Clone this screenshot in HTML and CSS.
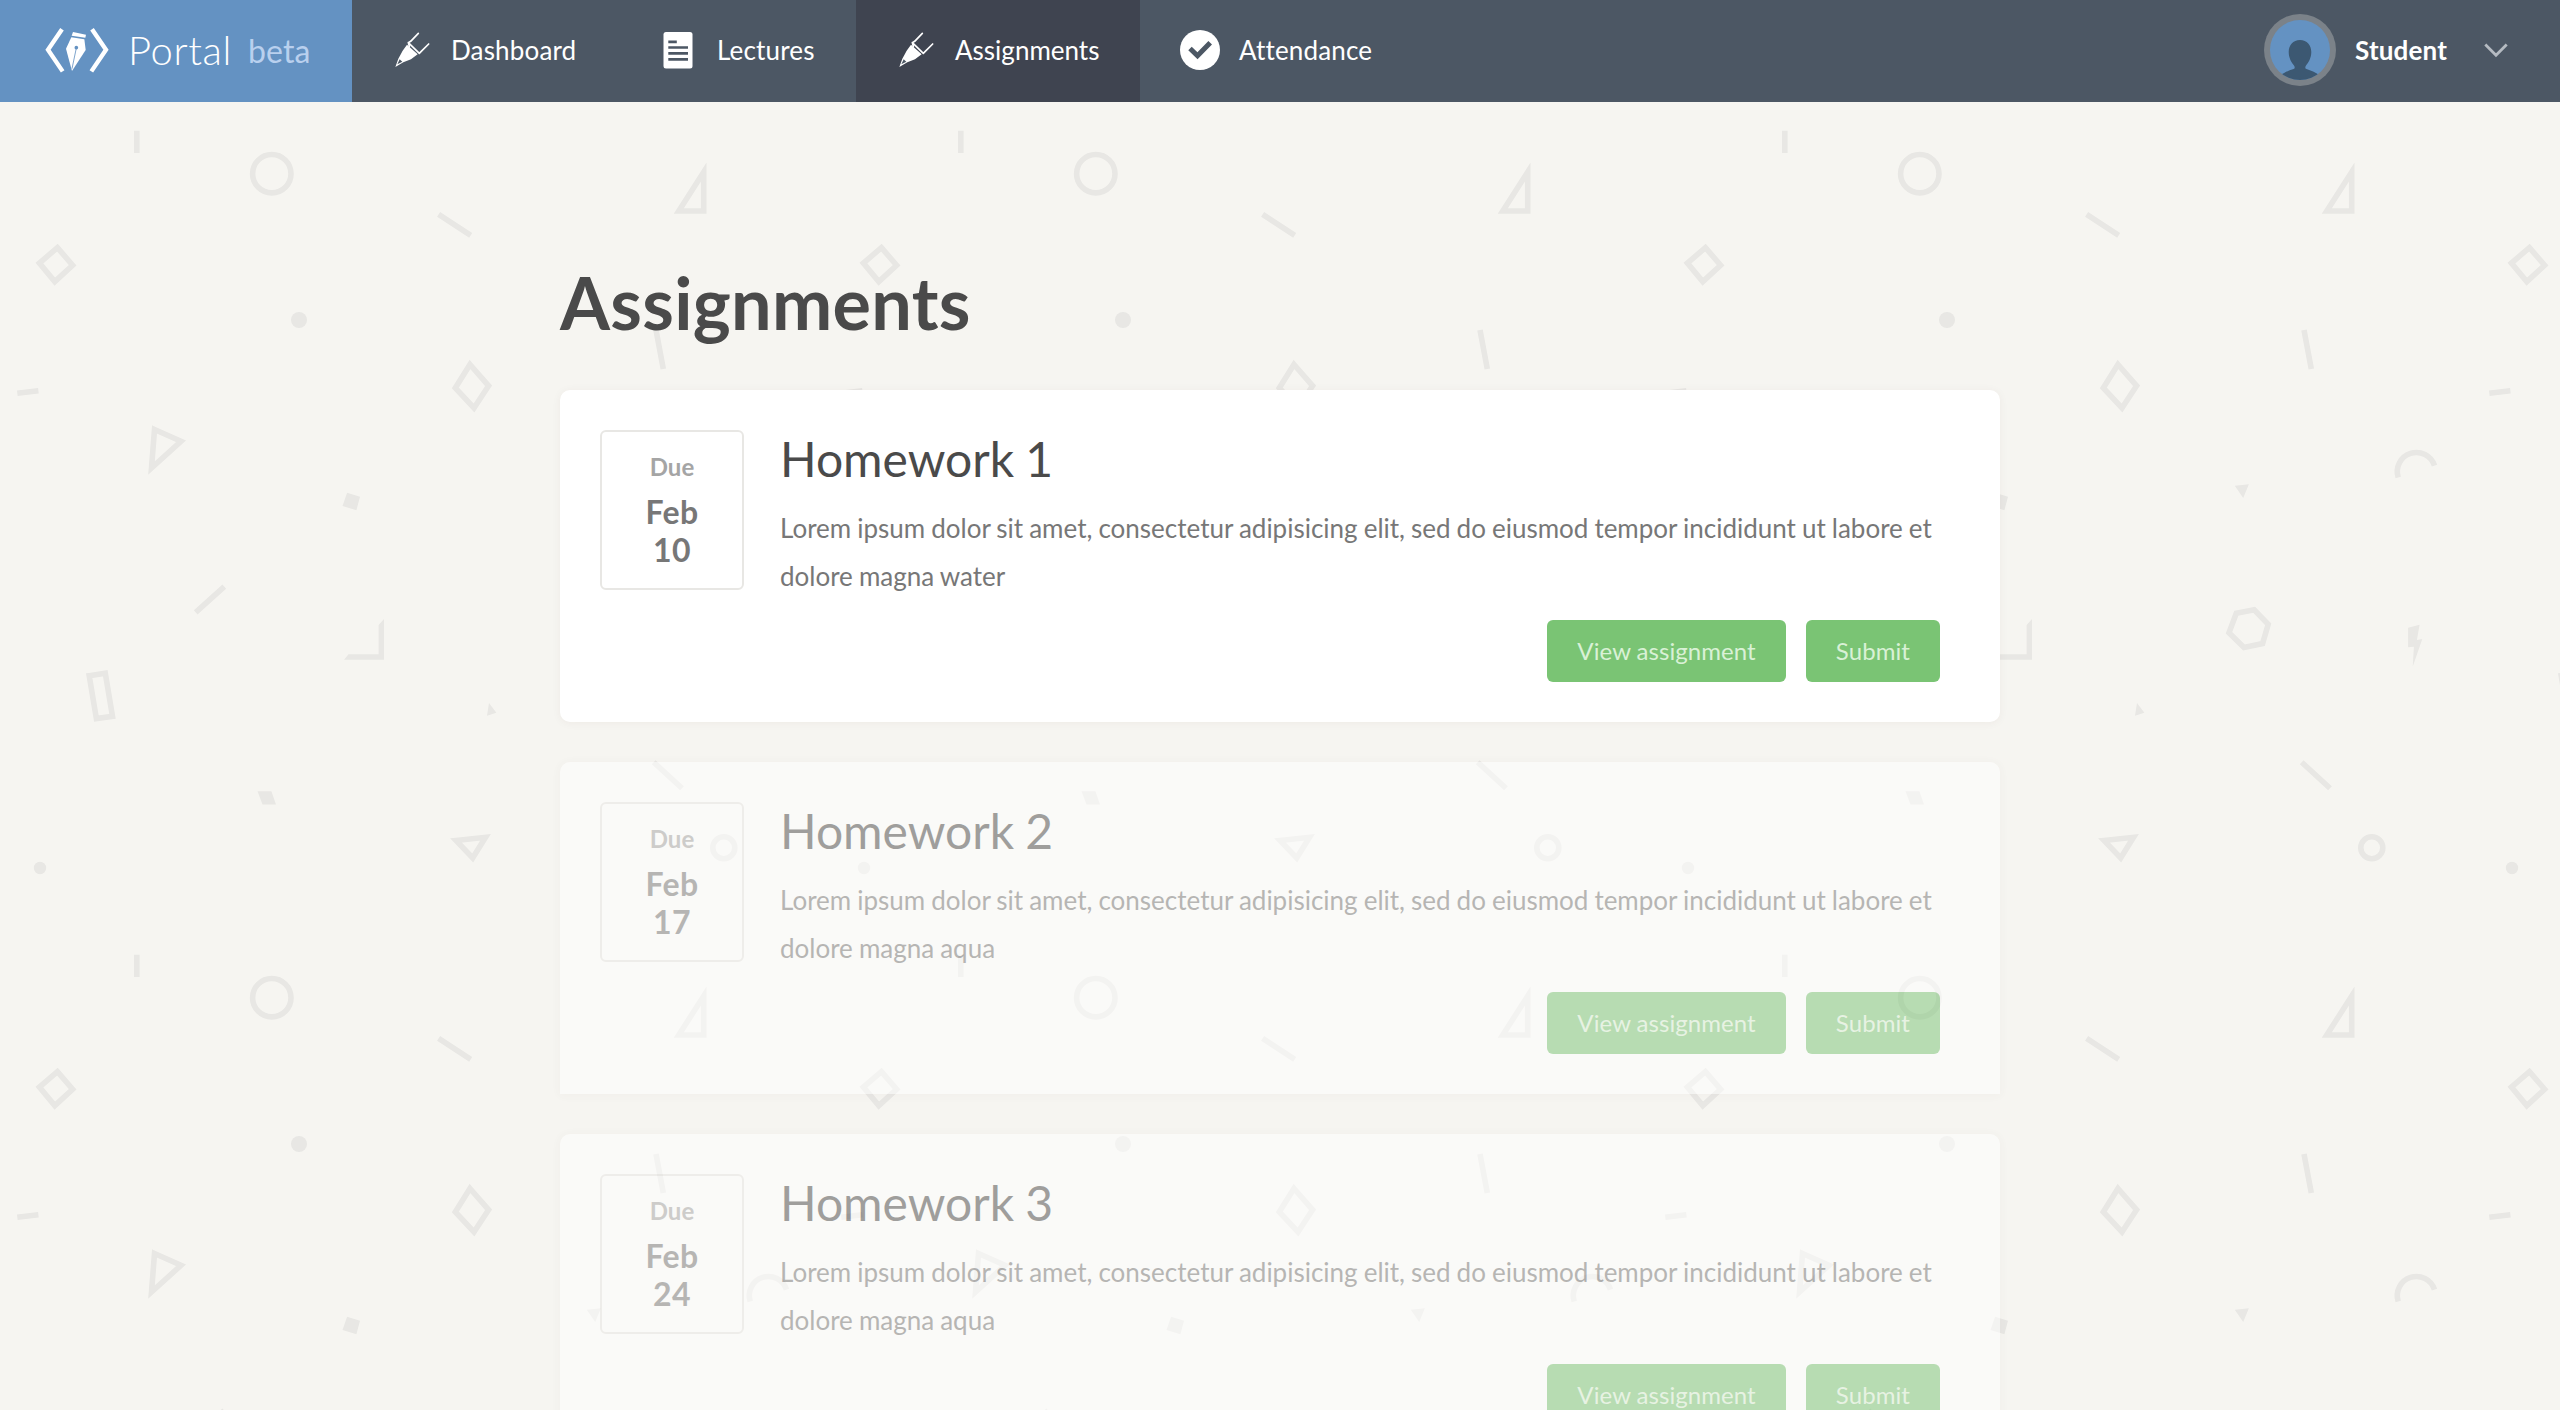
FILE: index.html
```html
<!DOCTYPE html>
<html lang="en">
<head>
<meta charset="utf-8">
<title>Portal – Assignments</title>
<link rel="stylesheet" href="styles.css">
</head>
<body>
<svg class="backdrop" aria-hidden="true">
  <defs>
    <pattern id="confetti" x="0" y="104" width="824" height="824" patternUnits="userSpaceOnUse">
      <g transform="translate(0,-104)" fill="none" stroke="#e8e7e4" stroke-width="5.6">
        <path d="M136.8 130.7V153M438.6 214.3L470.7 235.3M17.3 393.3L38.4 390.8M195.7 612.3L224.3 586.7M656 330L663.3 369M653.7 762.3L682 788.3"/>
        <circle cx="271.8" cy="173.7" r="19.2"/>
        <circle cx="723.8" cy="847.7" r="11"/>
        <path d="M57.4 247.6L72.6 265.3L54.8 281.6L39.4 263.1Z"/>
        <path d="M470 364.5L488.6 385.8L474 408L455.3 388Z"/>
        <path d="M154.5 429.5L181 441.3L151.5 468Z"/>
        <path d="M89.2 675.7L105.3 673.2L112.5 716.3L96.4 718.6Z"/>
        <path d="M456 840.5L485.5 837.3L472.7 858Z"/>
        <path d="M703.7 172V211H678.8Z"/>
        <path d="M750.2 477.5A19 19 0 1 1 786.5 465.7"/>
        <path d="M588.3 613.3L606.2 609.8L620.2 624.3L614.6 643.5L596 647.5L581 632.7Z"/>
        <g fill="#e8e7e4" stroke="none">
          <circle cx="299" cy="320" r="8"/>
          <circle cx="40" cy="868" r="6.2"/>
          <path d="M347.1 492.7L360 496.7L356.4 510.3L342.5 506Z"/>
          <path d="M384 619V659.7H344L348.5 654.3H378.6V625Z"/>
          <path d="M489 703L496.4 712.7L487 715.7Z"/>
          <path d="M257.5 791.3H271.4L276 804.5H262.5Z"/>
          <path d="M586.8 485.7L600.9 484.3L595.2 498Z"/>
          <path d="M760.1 627.7L771.6 624.7L768.9 640L774.3 639L764.7 666.7L765.9 646.7L760.1 647.3Z"/>
        </g>
      </g>
    </pattern>
    <symbol id="pen" viewBox="1056 24 120 120">
      <path d="M1101 68L1133 97L1113 112L1090 121L1066 135L1075 110L1088 86Z" fill="#fff"/>
      <path d="M1072 127L1079 112L1087 119Z" fill="#4c5764"/>
      <path d="M1135 34L1112 58L1105 62L1138 94L1143 89L1166 66M1105 62L1108 74" fill="none" stroke="#fff" stroke-width="5" stroke-linecap="round" stroke-linejoin="round"/>
    </symbol>
  </defs>
  <rect width="100%" height="100%" fill="url(#confetti)"/>
</svg>

<header class="topbar">
  <a class="brand">
    <svg class="brand-mark" viewBox="15 15 195 140">
      <path d="M66 22L24 83L68 148M156 22L198 83L154 148" fill="none" stroke="#fff" stroke-width="13"/>
      <path d="M99 30L138 38L136 47L95 41Z" fill="#fff"/>
      <path d="M94 46L133 52L137 84L96 147L87 114L78 80Z" fill="#fff"/>
      <path d="M109 78L96 140" stroke="#6492c2" stroke-width="2.500"/>
      <circle cx="109" cy="77" r="5.5" fill="#6492c2"/>
    </svg>
    <span class="brand-name">Portal</span>
    <span class="brand-tag">beta</span>
  </a>
  <nav class="nav">
    <a class="nav-item"><svg class="icon"><use href="#pen"/></svg>Dashboard</a>
    <a class="nav-item"><svg class="icon" viewBox="0 0 40 40">
      <rect x="5.5" y="2" width="29" height="36.5" rx="2.5" fill="#fff"/>
      <path d="M10.3 11.8H18.8M10.3 17.5H30M10.3 23.3H30M10.3 29.3H30" stroke="#4c5764" stroke-width="2.7"/>
    </svg>Lectures</a>
    <a class="nav-item active"><svg class="icon"><use href="#pen"/></svg>Assignments</a>
    <a class="nav-item"><svg class="icon" viewBox="0 0 40 40">
      <circle cx="20" cy="20" r="20" fill="#fff"/>
      <path d="M10 18.5L17.5 25.7L30.2 12.7" fill="none" stroke="#4c5764" stroke-width="5"/>
    </svg>Attendance</a>
  </nav>
  <div class="account">
    <svg class="avatar" viewBox="0 0 72 72">
      <defs><clipPath id="face"><circle cx="36" cy="36" r="30"/></clipPath></defs>
      <circle cx="36" cy="36" r="36" fill="#7b8289"/>
      <circle cx="36" cy="36" r="30" fill="#6492c2"/>
      <path clip-path="url(#face)" d="M36 26C43 26 47.300 31 47.300 38C47.300 44 44.500 48.500 42 51.500C41 53 41 54.500 42.500 55C47 56.500 51 58 56 61.500V70H16V61.500C21 58 25 56.500 29.500 55C31 54.500 31 53 30 51.500C27.500 48.500 24.700 44 24.700 38C24.700 31 29 26 36 26Z" fill="#3c5872"/>
    </svg>
    <span class="account-name">Student</span>
    <svg class="chevron" viewBox="0 0 24 15"><path d="M1.300 1.500L12 12.300L22.700 1.500" fill="none" stroke="#b5bbc2" stroke-width="2.800"/></svg>
  </div>
</header>

<main class="page">
  <h1 class="page-title">Assignments</h1>
  <article class="card">
    <div class="due"><span class="due-label">Due</span><span class="due-date">Feb<br>10</span></div>
    <div class="card-body">
      <h2 class="card-title">Homework 1</h2>
      <p class="card-text">Lorem ipsum dolor sit amet, consectetur adipisicing elit, sed do eiusmod tempor incididunt ut labore et dolore magna water</p>
      <div class="actions"><a class="button">View assignment</a><a class="button">Submit</a></div>
    </div>
  </article>
  <article class="card upcoming squared">
    <div class="due"><span class="due-label">Due</span><span class="due-date">Feb<br>17</span></div>
    <div class="card-body">
      <h2 class="card-title">Homework 2</h2>
      <p class="card-text">Lorem ipsum dolor sit amet, consectetur adipisicing elit, sed do eiusmod tempor incididunt ut labore et dolore magna aqua</p>
      <div class="actions"><a class="button">View assignment</a><a class="button">Submit</a></div>
    </div>
  </article>
  <article class="card upcoming">
    <div class="due"><span class="due-label">Due</span><span class="due-date">Feb<br>24</span></div>
    <div class="card-body">
      <h2 class="card-title">Homework 3</h2>
      <p class="card-text">Lorem ipsum dolor sit amet, consectetur adipisicing elit, sed do eiusmod tempor incididunt ut labore et dolore magna aqua</p>
      <div class="actions"><a class="button">View assignment</a><a class="button">Submit</a></div>
    </div>
  </article>
</main>
</body>
</html>
```

FILE: styles.css
```css
* { box-sizing: border-box; }

body {
  margin: 0;
  height: 1410px;
  overflow: hidden;
  background: #f6f5f1;
  color: #4a4a4a;
  font-family: Lato, "Liberation Sans", sans-serif;
}

.backdrop {
  position: absolute;
  inset: 0;
  z-index: -1;
  width: 100%;
  height: 1410px;
}

.topbar {
  display: flex;
  height: 102px;
  background: #4c5764;
  color: #fff;
  font-size: 26px;
  letter-spacing: 0.16px;
}

.brand {
  display: flex;
  align-items: center;
  width: 352px;
  padding: 0 0 2px 45px;
  background: #6492c2;
}

.brand-mark {
  width: 65px;
  height: 46.7px;
}

.brand-name {
  margin-left: 18px;
  font-size: 40px;
  font-weight: 300;
  letter-spacing: 0.6px;
}

.brand-tag {
  margin-left: 16px;
  font-size: 32px;
  color: #b9d0ee;
}

.nav {
  display: grid;
  grid-template-columns: 266px 238px 284px auto;
}

.nav-item {
  display: flex;
  align-items: center;
  gap: 19px;
  padding: 0 0 2px 40px;
  white-space: nowrap;
}

.nav-item.active {
  background: #3f4450;
  letter-spacing: 0;
}

.icon {
  flex: none;
  width: 40px;
  height: 40px;
}

.account {
  display: flex;
  align-items: center;
  margin-left: auto;
  padding: 0 52px 2px 0;
}

.avatar {
  width: 72px;
  height: 72px;
}

.account-name {
  margin: 0 37px 0 19px;
  font-weight: 700;
}

.chevron {
  width: 24px;
  height: 15px;
}

.page {
  display: flex;
  flex-direction: column;
  gap: 40px;
  width: 1440px;
  margin: 0 auto;
  padding-top: 157px;
}

.page-title {
  margin: 0 0 5px;
  font-size: 72px;
  line-height: 86px;
  font-weight: 700;
  letter-spacing: 0.3px;
}

.card {
  display: flex;
  gap: 36px;
  flex: none;
  height: 332px;
  padding: 40px 60px 40px 40px;
  border-radius: 10px;
  background: #fff;
  box-shadow: 0 1px 10px rgba(80, 30, 20, 0.05);
  word-spacing: -0.024em;
}

.upcoming { opacity: 0.5; }

.squared { border-radius: 10px 10px 0 0; }

.due {
  display: flex;
  flex-direction: column;
  align-items: center;
  gap: 12px;
  flex: none;
  width: 144px;
  height: 160px;
  padding-top: 20px;
  border: 2px solid #e8e7e4;
  border-radius: 6px;
  text-align: center;
  font-weight: 700;
}

.due-label {
  color: #a5a5a5;
  font-size: 24px;
  line-height: 29px;
}

.due-date {
  color: #777;
  font-size: 32px;
  line-height: 38px;
  letter-spacing: 0.4px;
}

.card-body { flex: 1; }

.card-title {
  margin: 0 0 16px;
  font-size: 48px;
  line-height: 58px;
  font-weight: 400;
  word-spacing: -1.2px;
}

.card-text {
  margin: 0 0 20px;
  color: #777;
  font-size: 26px;
  line-height: 48px;
  word-spacing: -0.62px;
}

.actions {
  display: flex;
  justify-content: flex-end;
  gap: 20px;
}

.button {
  padding: 0 30px;
  border-radius: 6px;
  background: #7ac474;
  color: #d9f1d6;
  font-size: 24px;
  line-height: 62px;
  letter-spacing: 0.08px;
}
```
